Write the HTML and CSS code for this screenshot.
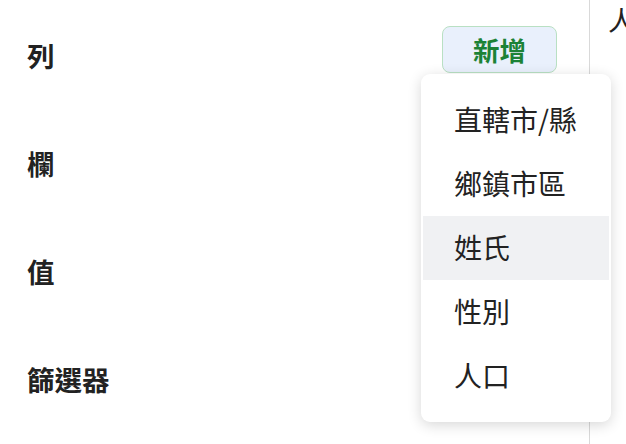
FILE: index.html
```html
<!DOCTYPE html>
<html lang="zh-Hant">
<head>
<meta charset="utf-8">
<link rel="stylesheet" href="styles.css">
</head>
<body>
<div class="layout">
  <section class="fields">
    <div class="row">
      <div class="label">列</div>
      <div class="add-wrap">
        <button class="add-btn">新增</button>
        <ul class="menu">
          <li class="item">直轄市/縣</li>
          <li class="item">鄉鎮市區</li>
          <li class="item hover">姓氏</li>
          <li class="item">性別</li>
          <li class="item">人口</li>
        </ul>
      </div>
    </div>
    <div class="row"><div class="label">欄</div></div>
    <div class="row"><div class="label">值</div></div>
    <div class="row"><div class="label">篩選器</div></div>
  </section>
  <section class="preview">
    <div class="preview-text">人口</div>
  </section>
</div>
</body>
</html>
```
FILE: styles.css
```css
html, body {
  margin: 0;
  padding: 0;
  background: #ffffff;
  width: 626px;
  height: 444px;
  overflow: hidden;
}
body {
  font-family: "Noto Sans CJK TC", "Noto Sans", sans-serif;
  color: #222222;
}
.layout {
  display: flex;
  height: 444px;
}
.fields {
  flex: none;
  box-sizing: border-box;
  width: 590px;
  border-right: 1px solid #d9d9d9;
  padding: 26px 32px 0 27px;
}
.row {
  display: flex;
  justify-content: space-between;
  align-items: flex-start;
  height: 108px;
}
.label {
  font-size: 27.5px;
  line-height: 36px;
  font-weight: 700;
  margin-top: 11px;
  color: #222222;
}
.add-wrap {
  position: relative;
}
.add-btn {
  display: block;
  width: 115px;
  height: 47px;
  box-sizing: border-box;
  border: 1.5px solid #b9e0c3;
  border-radius: 8px;
  background: #e9f0fc;
  color: #1c8236;
  font-family: "Noto Sans CJK TC", "Noto Sans", sans-serif;
  font-size: 26.5px;
  font-weight: 700;
  padding: 0;
  line-height: 42px;
}
.menu {
  position: absolute;
  top: 48px;
  left: -21px;
  width: 190px;
  margin: 0;
  padding: 14px 0;
  list-style: none;
  background: #ffffff;
  border-radius: 9px;
  box-shadow: 0 3px 14px rgba(0, 0, 0, 0.16);
  z-index: 2;
}
.item {
  height: 64px;
  line-height: 62px;
  padding-left: 33px;
  font-size: 28px;
  color: #222222;
  white-space: nowrap;
}
.item.hover {
  background: #f0f1f3;
  margin: 0 2px;
  padding-left: 31px;
}
.preview {
  flex: 1;
  padding-left: 18px;
  overflow: hidden;
}
.preview-text {
  font-size: 27px;
  line-height: 36px;
  margin-top: 2px;
  white-space: nowrap;
}
```
